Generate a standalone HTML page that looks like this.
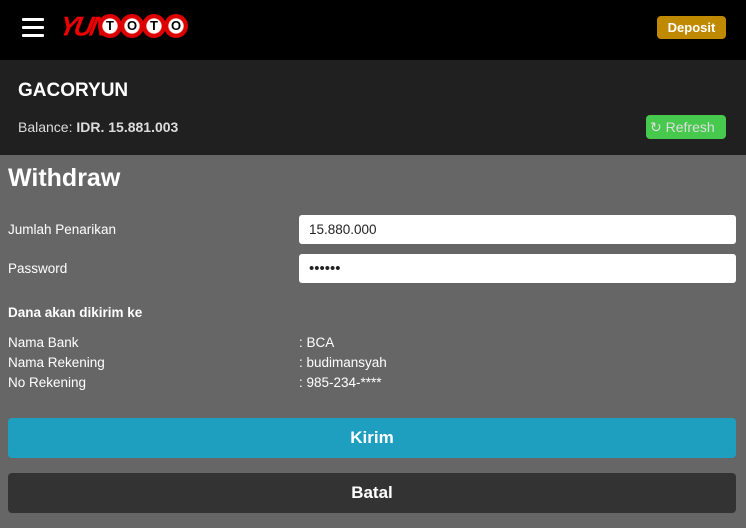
<!DOCTYPE html>
<html><head><style>
*{margin:0;padding:0;box-sizing:border-box}
body{width:746px;height:528px;background:#666;font-family:"Liberation Sans","DejaVu Sans",sans-serif;color:#fff;position:relative;overflow:hidden}
.hdr{position:absolute;left:0;top:0;width:746px;height:60px;background:#000}
.acc{position:absolute;left:0;top:60px;width:746px;height:95px;background:#202020}
.a{position:absolute}
.bar{position:absolute;left:22px;width:22px;height:3px;background:#fff;border-radius:1px}
.ball{position:absolute;top:14px;width:24px;height:24px;border-radius:50%;background:radial-gradient(circle,#fff 0 42%,#d00 48% 75%,#700 82%);color:#000;font-weight:bold;font-size:13px;text-align:center;line-height:24px}
.inp{position:absolute;left:299px;width:437px;height:29px;background:#fff;border-radius:3px;color:#222;font-size:13.5px;padding-left:10px;line-height:29px}
.lbl{position:absolute;left:8px;font-size:13.5px}
.btn{position:absolute;left:8px;width:728px;height:40px;border-radius:4px;text-align:center;line-height:40px;font-size:17px;font-weight:bold}
</style></head><body>
<div class="hdr">
<div class="bar" style="top:18px"></div><div class="bar" style="top:26px"></div><div class="bar" style="top:34px"></div>
<div class="a" style="left:60px;top:11px;font-size:26px;font-weight:bold;font-style:italic;color:#e00;letter-spacing:-3px;transform:skewX(-12deg) scaleY(1.05)">YUNI</div>
<div class="ball" style="left:98px">T</div><div class="ball" style="left:120px">O</div><div class="ball" style="left:142px">T</div><div class="ball" style="left:164px">O</div>
<div class="a" style="left:657px;top:16px;width:69px;height:23px;background:#c08a00;border-radius:4px;font-size:13px;font-weight:bold;text-align:center;line-height:23px">Deposit</div>
</div>
<div class="acc">
<div class="a" style="left:18px;top:20px;font-size:19px;font-weight:bold">GACORYUN</div>
<div class="a" style="left:18px;top:59px;font-size:14px;color:#ddd">Balance: <b>IDR. 15.881.003</b></div>
<div class="a" style="left:646px;top:55px;width:80px;height:24px;background:#47c94d;border-radius:4px;font-size:14px;color:#ddd;line-height:24px;padding-left:4px">&#x21bb; Refresh</div>
</div>
<div class="a" style="left:8px;top:164px;font-size:25px;font-weight:bold">Withdraw</div>
<div class="lbl" style="top:222px">Jumlah Penarikan</div>
<div class="inp" style="top:215px">15.880.000</div>
<div class="lbl" style="top:261px">Password</div>
<div class="inp" style="top:254px;font-size:15px">••••••</div>
<div class="lbl" style="top:305px;font-weight:bold">Dana akan dikirim ke</div>
<div class="lbl" style="top:335px">Nama Bank</div><div class="lbl" style="left:299px;top:335px">: BCA</div>
<div class="lbl" style="top:355px">Nama Rekening</div><div class="lbl" style="left:299px;top:355px">: budimansyah</div>
<div class="lbl" style="top:375px">No Rekening</div><div class="lbl" style="left:299px;top:375px">: 985-234-****</div>
<div class="btn" style="top:418px;background:#1f9fc0">Kirim</div>
<div class="btn" style="top:473px;background:#333">Batal</div>
</body></html>
